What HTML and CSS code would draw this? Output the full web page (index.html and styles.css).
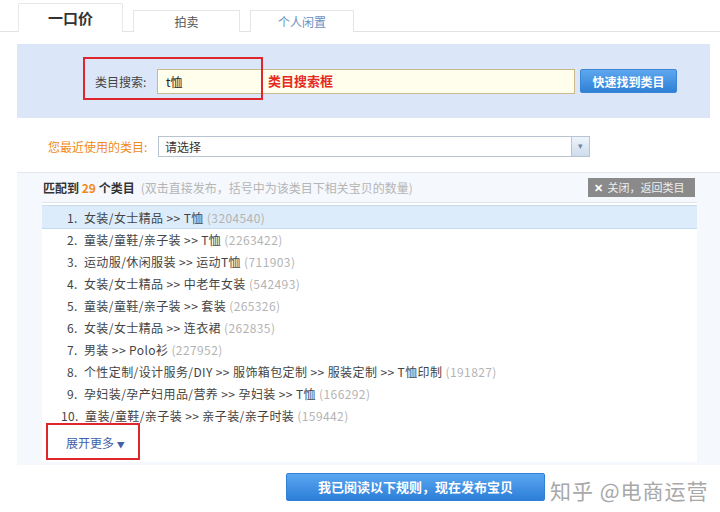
FILE: index.html
```html
<!DOCTYPE html>
<html lang="zh-CN">
<head>
  <meta charset="UTF-8" />
  <title>发布宝贝 - 选择类目</title>
  <link rel="stylesheet" href="styles.css">
</head>
<body>
  <!-- Tabs -->
  <div class="tabs">
    <div class="tab active">一口价</div>
    <div class="tab">拍卖</div>
    <div class="tab">个人闲置</div>
  </div>

  <!-- Search panel -->
  <div class="search-panel">
    <span class="search-label">类目搜索:</span>
    <div class="search-input">t恤</div>
    <button class="quick-btn">快速找到类目</button>
    <div class="mark mark-search"></div>
    <span class="mark-text">类目搜索框</span>
  </div>

  <!-- Recent -->
  <div class="recent">
    <span class="recent-label">您最近使用的类目:</span>
    <div class="select">
      <span>请选择</span>
      <span class="select-arrow">▾</span>
    </div>
  </div>

  <!-- Results -->
  <div class="results">
    <div class="results-head">
      <span class="head-title">匹配到 <em>29</em> 个类目</span>
      <span class="head-hint">(双击直接发布，括号中为该类目下相关宝贝的数量)</span>
      <span class="close-btn"><b>✕</b> 关闭，返回类目</span>
    </div>
    <div class="results-list">
      <ul>
        <li class="on">1.&nbsp; 女装/女士精品 &gt;&gt; T恤 <i>(3204540)</i></li>
        <li>2.&nbsp; 童装/童鞋/亲子装 &gt;&gt; T恤 <i>(2263422)</i></li>
        <li>3.&nbsp; 运动服/休闲服装 &gt;&gt; 运动T恤 <i>(711903)</i></li>
        <li>4.&nbsp; 女装/女士精品 &gt;&gt; 中老年女装 <i>(542493)</i></li>
        <li>5.&nbsp; 童装/童鞋/亲子装 &gt;&gt; 套装 <i>(265326)</i></li>
        <li>6.&nbsp; 女装/女士精品 &gt;&gt; 连衣裙 <i>(262835)</i></li>
        <li>7.&nbsp; 男装 &gt;&gt; Polo衫 <i>(227952)</i></li>
        <li>8.&nbsp; 个性定制/设计服务/DIY &gt;&gt; 服饰箱包定制 &gt;&gt; 服装定制 &gt;&gt; T恤印制 <i>(191827)</i></li>
        <li>9.&nbsp; 孕妇装/孕产妇用品/营养 &gt;&gt; 孕妇装 &gt;&gt; T恤 <i>(166292)</i></li>
        <li class="wide">10.&nbsp; 童装/童鞋/亲子装 &gt;&gt; 亲子装/亲子时装 <i>(159442)</i></li>
      </ul>
      <div class="more">
        <span class="more-btn">展开更多 <small>▼</small></span>
        <div class="mark mark-more"></div>
      </div>
    </div>
  </div>

  <!-- Footer -->
  <div class="footer">
    <button class="publish-btn">我已阅读以下规则，现在发布宝贝</button>
    <span class="watermark">知乎 @电商运营</span>
  </div>
</body>
</html>
```

FILE: styles.css
```css
* {
  margin: 0;
  padding: 0;
  box-sizing: border-box;
}

body {
  width: 720px;
  height: 512px;
  overflow: hidden;
  background: #fff;
  font-family: "Noto Sans CJK SC", "Liberation Sans", sans-serif;
  font-size: 12px;
  color: #444;
}

/* tabs */
.tabs {
  display: flex;
  align-items: flex-end;
  gap: 10px;
  height: 32px;
  padding-left: 18px;
  border-bottom: 1px solid #e2e2e2;
}

.tab {
  width: 107px;
  height: 22px;
  margin-bottom: -1px;
  border: 1px solid #e6e6e6;
  border-bottom: none;
  background: #fff;
  text-align: center;
  line-height: 22px;
  font-size: 12px;
  color: #555;
}

.tab.active {
  width: 105px;
  height: 29px;
  line-height: 27px;
  font-size: 15px;
  font-weight: bold;
  color: #333;
  border-color: #e8e8e8;
  border-radius: 2px 2px 0 0;
}

.tab:last-child {
  width: 104px;
  color: #6a8fc0;
}

/* search panel */
.search-panel {
  position: relative;
  display: flex;
  align-items: center;
  width: 693px;
  height: 74px;
  margin: 12px 0 0 17px;
  padding-left: 78px;
  background: #dbe7f8;
}

.search-label {
  width: 62px;
  color: #444;
}

.search-input {
  width: 418px;
  height: 25px;
  padding-left: 8px;
  border: 1px solid #c9b98c;
  background: #fffdec;
  line-height: 23px;
  font-size: 12px;
  color: #222;
}

.quick-btn {
  width: 97px;
  height: 24px;
  margin-left: 5px;
  border: 1px solid #3a86d4;
  border-radius: 2px;
  background: linear-gradient(#5ea7ee, #2f81d6);
  color: #fff;
  font-family: inherit;
  font-size: 12px;
  font-weight: bold;
}

/* red annotation boxes */
.mark {
  position: absolute;
  border: 2px solid #e0262d;
  pointer-events: none;
}

.mark-search {
  left: 66px;
  top: 13px;
  width: 180px;
  height: 43px;
}

.mark-text {
  position: absolute;
  left: 251px;
  top: 27px;
  color: #e52a22;
  font-weight: bold;
  font-size: 13px;
}

/* recent */
.recent {
  display: flex;
  align-items: center;
  height: 21px;
  margin-top: 18px;
  padding-left: 48px;
}

.recent-label {
  width: 110px;
  color: #f08a1c;
}

.select {
  display: flex;
  justify-content: space-between;
  align-items: center;
  width: 432px;
  height: 21px;
  padding-left: 6px;
  border: 1px solid #b9c4d2;
  background: #fff;
  color: #333;
}

.select-arrow {
  width: 18px;
  height: 19px;
  border-left: 1px solid #b9c4d2;
  background: linear-gradient(#eef4fb, #cfdcec);
  text-align: center;
  line-height: 18px;
  font-size: 9px;
  color: #6d87a8;
}

/* results */
.results {
  width: 703px;
  height: 293px;
  margin: 15px 0 0 17px;
  background: #f5f8fd;
  border-top: 1px solid #e3e6ea;
}

.results-head {
  display: flex;
  align-items: center;
  height: 29px;
  padding: 0 25px 0 26px;
}

.head-title {
  font-weight: bold;
  color: #333;
}

.head-title em {
  font-style: normal;
  color: #f08a1c;
}

.head-hint {
  margin-left: 6px;
  color: #b5b5b5;
}

.close-btn {
  margin-left: auto;
  width: 107px;
  height: 19px;
  padding-left: 6px;
  background: #8a8a8a;
  color: #eee;
  line-height: 19px;
  font-size: 11px;
}

.close-btn b {
  color: #fff;
  margin-right: 2px;
}

.results-list {
  width: 655px;
  height: 260px;
  margin-left: 25px;
  padding-top: 2px;
  background: #fff;
  border-top: 1px solid #dfe4ea;
}

.results-list ul {
  list-style: none;
}

.results-list li {
  height: 22px;
  padding-left: 25px;
  line-height: 22px;
  letter-spacing: 0.4px;
  color: #444;
  white-space: nowrap;
}

.results-list li.on {
  height: 24px;
  line-height: 24px;
  background: #dcecfb;
  border-top: 1px solid #c6dbef;
  border-bottom: 1px solid #c6dbef;
}

.results-list li.wide {
  padding-left: 19px;
}

.results-list i {
  font-style: normal;
  color: #b4b4b4;
}

.more {
  position: relative;
  height: 40px;
  padding: 7px 0 0 24px;
}

.more-btn {
  color: #3f61a8;
}

.more-btn small {
  font-size: 8px;
  color: #3f61a8;
}

.mark-more {
  left: 4px;
  top: -4px;
  width: 94px;
  height: 37px;
}

/* footer */
.footer {
  display: flex;
  align-items: center;
  height: 40px;
  padding: 3px 0 0 286px;
}

.publish-btn {
  width: 259px;
  height: 28px;
  border: 1px solid #2f80d6;
  border-radius: 2px;
  background: linear-gradient(#5aa6f0, #2c7ed8);
  color: #fff;
  font-family: inherit;
  font-size: 13px;
  font-weight: bold;
}

.watermark {
  margin: 6px 0 0 5px;
  color: #a8a8a8;
  font-size: 21px;
  letter-spacing: 1px;
}
```
